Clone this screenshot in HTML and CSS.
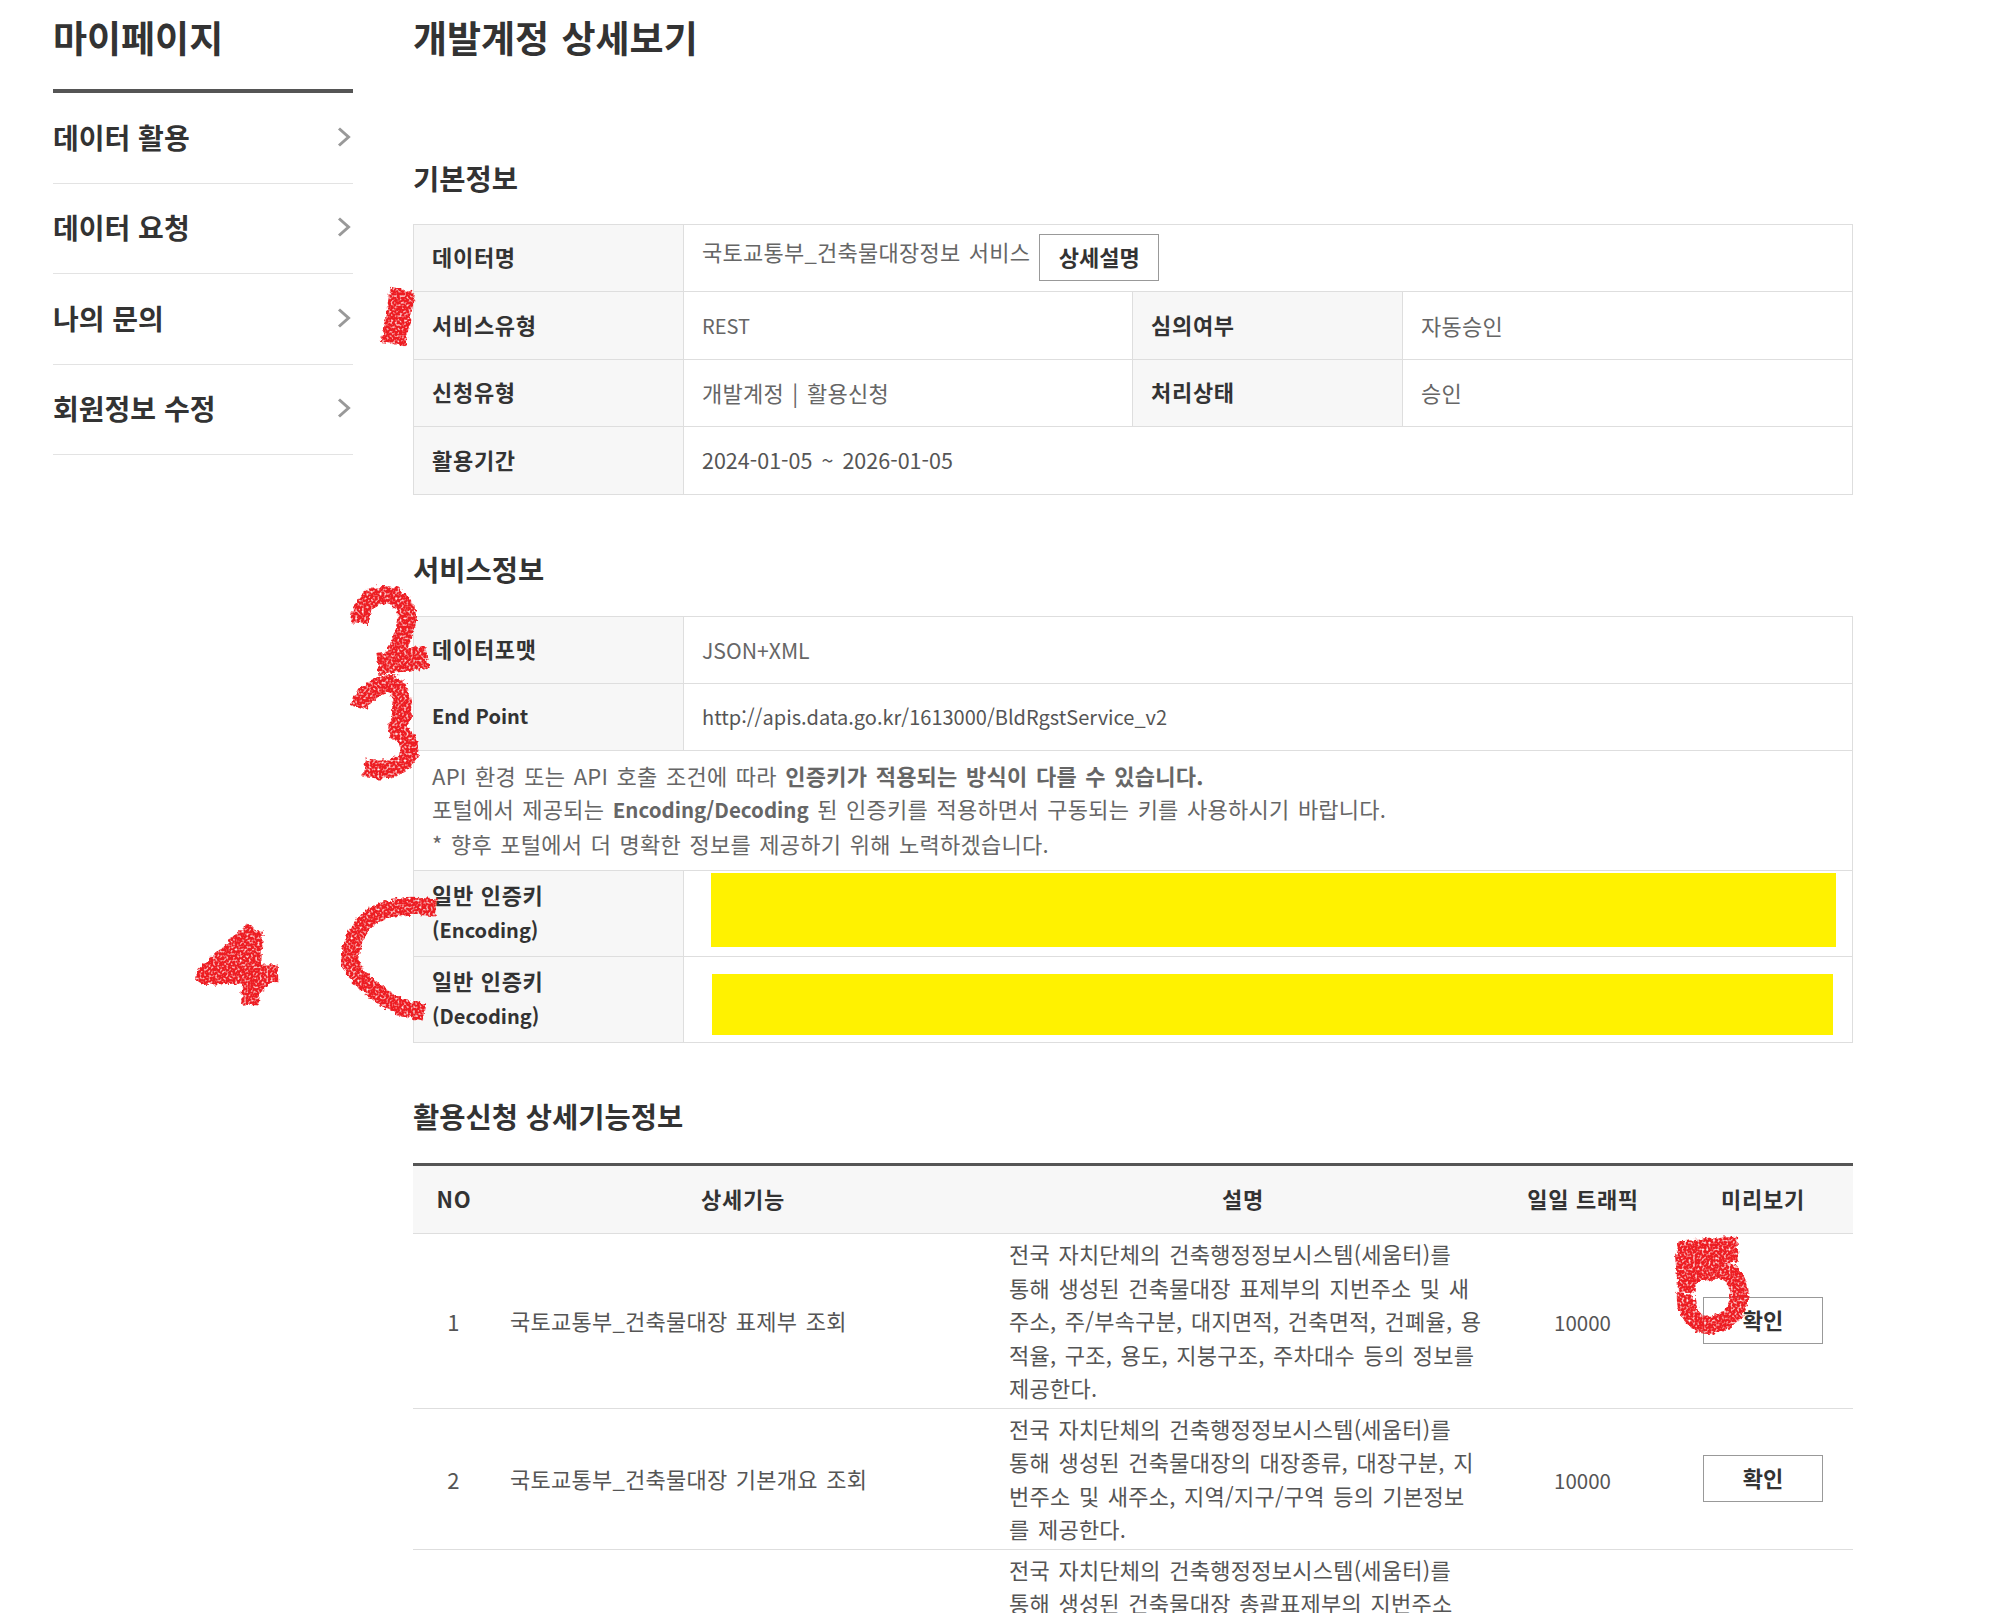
FILE: index.html
```html
<!DOCTYPE html>
<html lang="ko">
<head>
<meta charset="utf-8">
<title>개발계정 상세보기</title>
<link rel="stylesheet" href="styles.css">
</head>
<body>
<div class="page">
  <aside class="side">
    <h2 class="side-title">마이페이지</h2>
    <ul class="menu">
      <li class="menu-item"><span>데이터 활용</span><svg class="chev" viewBox="0 0 14 20"><path d="M2 1.5 L11.5 10 L2 18.5"/></svg></li>
      <li class="menu-item"><span>데이터 요청</span><svg class="chev" viewBox="0 0 14 20"><path d="M2 1.5 L11.5 10 L2 18.5"/></svg></li>
      <li class="menu-item"><span>나의 문의</span><svg class="chev" viewBox="0 0 14 20"><path d="M2 1.5 L11.5 10 L2 18.5"/></svg></li>
      <li class="menu-item"><span>회원정보 수정</span><svg class="chev" viewBox="0 0 14 20"><path d="M2 1.5 L11.5 10 L2 18.5"/></svg></li>
    </ul>
  </aside>
  <main class="main">
    <h1 class="page-title">개발계정 상세보기</h1>

    <h3 class="sec-title sec-basic">기본정보</h3>
    <table class="info basic">
      <colgroup><col class="c-label"><col class="c-val"><col class="c-label"><col></colgroup>
      <tr class="r67">
        <th>데이터명</th>
        <td colspan="3"><span class="lift">국토교통부_건축물대장정보 서비스</span><button class="btn btn-inline">상세설명</button></td>
      </tr>
      <tr class="r68"><th>서비스유형</th><td><span class="lat">REST</span></td><th>심의여부</th><td>자동승인</td></tr>
      <tr class="r67"><th>신청유형</th><td>개발계정 | 활용신청</td><th>처리상태</th><td>승인</td></tr>
      <tr class="r68"><th>활용기간</th><td colspan="3" class="dark"><span class="lat-d">2024-01-05 ~ 2026-01-05</span></td></tr>
    </table>

    <h3 class="sec-title sec-service">서비스정보</h3>
    <table class="info service">
      <colgroup><col class="c-label"><col></colgroup>
      <tr class="r67"><th>데이터포맷</th><td><span class="lat-j">JSON+XML</span></td></tr>
      <tr class="r67"><th><span class="lat">End Point</span></th><td class="dark"><span class="lat">http://apis.data.go.kr/1613000/BldRgstService_v2</span></td></tr>
      <tr>
        <td colspan="2" class="notice">API 환경 또는 API 호출 조건에 따라 <b>인증키가 적용되는 방식이 다를 수 있습니다.</b><br>
        포털에서 제공되는 <b class="lat-w">Encoding/Decoding</b> 된 인증키를 적용하면서 구동되는 키를 사용하시기 바랍니다.<br>
        * 향후 포털에서 더 명확한 정보를 제공하기 위해 노력하겠습니다.</td>
      </tr>
      <tr class="r86"><th>일반 인증키<br><span class="lat">(Encoding)</span></th><td class="key key-enc"><div class="mask mask-enc"></div></td></tr>
      <tr class="r86"><th>일반 인증키<br><span class="lat">(Decoding)</span></th><td class="key key-dec"><div class="mask mask-dec"></div></td></tr>
    </table>

    <h3 class="sec-title sec-detail">활용신청 상세기능정보</h3>
    <table class="detail">
      <colgroup><col class="d1"><col class="d2"><col class="d3"><col class="d4"><col></colgroup>
      <thead>
        <tr><th>NO</th><th>상세기능</th><th>설명</th><th>일일 트래픽</th><th>미리보기</th></tr>
      </thead>
      <tbody>
        <tr>
          <td class="ctr">1</td>
          <td class="name">국토교통부_건축물대장 표제부 조회</td>
          <td class="desc">전국 자치단체의 건축행정정보시스템(세움터)를<br>통해 생성된 건축물대장 표제부의 지번주소 및 새<br>주소, 주/부속구분, 대지면적, 건축면적, 건폐율, 용<br>적율, 구조, 용도, 지붕구조, 주차대수 등의 정보를<br>제공한다.</td>
          <td class="ctr"><span class="lat-w">10000</span></td>
          <td class="ctr"><button class="btn">확인</button></td>
        </tr>
        <tr>
          <td class="ctr">2</td>
          <td class="name">국토교통부_건축물대장 기본개요 조회</td>
          <td class="desc">전국 자치단체의 건축행정정보시스템(세움터)를<br>통해 생성된 건축물대장의 대장종류, 대장구분, 지<br>번주소 및 새주소, 지역/지구/구역 등의 기본정보<br>를 제공한다.</td>
          <td class="ctr"><span class="lat-w">10000</span></td>
          <td class="ctr"><button class="btn">확인</button></td>
        </tr>
        <tr class="row-tall">
          <td class="ctr">3</td>
          <td class="name">국토교통부_건축물대장 총괄표제부 조회</td>
          <td class="desc">전국 자치단체의 건축행정정보시스템(세움터)를<br>통해 생성된 건축물대장 총괄표제부의 지번주소</td>
          <td class="ctr"><span class="lat-w">10000</span></td>
          <td class="ctr"><button class="btn">확인</button></td>
        </tr>
      </tbody>
    </table>
  </main>

  <svg class="scribbles" viewBox="0 0 2006 1613" aria-hidden="true">
    <defs>
      <filter id="rough" x="-5%" y="-5%" width="110%" height="110%">
        <feTurbulence type="fractalNoise" baseFrequency="0.22" numOctaves="2" seed="4" result="n"/>
        <feDisplacementMap in="SourceGraphic" in2="n" scale="7" xChannelSelector="R" yChannelSelector="G" result="d"/>
        <feGaussianBlur in="d" stdDeviation="0.7" result="b"/>
        <feTurbulence type="fractalNoise" baseFrequency="0.45" numOctaves="1" seed="9"/>
        <feColorMatrix type="matrix" values="0 0 0 0 0  0 0 0 0 0  0 0 0 0 0  3 0 0 0 -0.55" result="speck"/>
        <feComposite in="b" in2="speck" operator="in"/>
      </filter>
    </defs>
    <g class="ink" filter="url(#rough)">
      <path class="w25" d="M403 290 L393 344"/>
      <path class="w18" d="M359 623 C361 603 372 595 384 595 C400 595 408 607 407 621 C405 635 398 645 395 659"/>
      <path class="w22" d="M378 664 L427 657"/>
      <path class="w18" d="M359 707 C364 692 380 684 392 684 C402 690 403 704 402 714 C400 722 396 726 397 730 C408 738 412 748 408 756 C402 768 386 772 364 768"/>
      <path class="w18" d="M254 930 L204 976 L278 973"/>
      <path class="w18" d="M254 930 L250 1005"/>
      <path class="fill" d="M250 935 L205 978 L275 980 L252 1000 Z"/>
      <path class="w16" d="M436 908 C415 905 392 905 374 915 C358 925 351 942 350 958 C352 975 368 985 384 998 C396 1006 410 1010 424 1012"/>
      <path class="w25" d="M1678 1254 L1738 1249"/>
      <path class="w18" d="M1684 1254 L1687 1292"/>
      <path class="w18" d="M1688 1276 C1705 1270 1726 1268 1733 1276 C1742 1288 1742 1300 1733 1314 C1724 1324 1708 1328 1698 1322 C1688 1314 1685 1304 1686 1294"/>
    </g>
  </svg>
</div>
</body>
</html>
```
FILE: styles.css
```css
* { box-sizing: border-box; }
html, body { margin: 0; padding: 0; height: 1613px; overflow: hidden; background: #fff; }
body { font-family: "Noto Sans CJK KR", "Noto Sans", sans-serif; color: #333; font-size: 22px; }

.page { position: relative; display: flex; width: 2006px; height: 1613px; overflow: hidden; padding-left: 53px; gap: 60px; }

.side { width: 300px; flex: none; }
.side-title { margin: 0; height: 93px; border-bottom: 4px solid #555; font-size: 37px; font-weight: 700; line-height: 75px; }
.menu { list-style: none; margin: 0; padding: 0; }
.menu-item { display: flex; align-items: center; justify-content: space-between; height: 90.5px; padding-bottom: 2px; border-bottom: 1px solid #e3e3e3; font-size: 28px; font-weight: 700; }
.chev { width: 14px; height: 20px; fill: none; stroke: #999; stroke-width: 3; margin-right: 2px; }

.main { width: 1440px; flex: none; }
.page-title { margin: 0; height: 78px; font-size: 37px; font-weight: 700; line-height: 75px; word-spacing: 2px; }
.sec-title { margin: 0; font-size: 28.5px; font-weight: 700; line-height: 36px; }
.sec-basic { margin-top: 82px; margin-bottom: 28px; }
.sec-service { margin-top: 56px; margin-bottom: 29px; }
.sec-detail { margin-top: 55px; margin-bottom: 29px; }

table { border-collapse: collapse; table-layout: fixed; width: 1440px; }
.c-label { width: 270px; }
.c-val { width: 449px; }
.info th, .info td { border: 1px solid #dedede; padding: 0 18px; font-size: 22px; line-height: 34px; }
.info th { background: #f7f7f7; font-weight: 700; text-align: left; color: #333; padding-bottom: 4px; letter-spacing: 0.7px; }
.info td { color: #666; padding-left: 18px; padding-bottom: 2px; letter-spacing: 0.25px; word-spacing: 2px; }
.info td.dark { color: #555; }
.r67 { height: 67px; }
.r68 { height: 68px; }
.r86 { height: 86px; }
.lift { position: relative; top: -2px; }
.lat { font-size: 20px; letter-spacing: 0; word-spacing: 0; }
.lat-w { font-size: 20.5px; letter-spacing: 0; word-spacing: 0; }
.lat-j { font-size: 21.2px; letter-spacing: 0; word-spacing: 0; }
.lat-d { font-size: 21.5px; letter-spacing: 0; word-spacing: 3px; }
.notice { height: 120px; line-height: 33.5px !important; }
.info td.key { padding: 0; }
.mask { background: #fff200; }
.mask-enc { height: 74px; width: 1125px; margin: -8px 0 0 27px; }
.mask-dec { height: 61px; width: 1121px; margin: 10px 0 0 28px; }

.btn { width: 120px; height: 47px; background: #fff; border: 1px solid #999; font: 700 22px "Noto Sans CJK KR", "Noto Sans", sans-serif; color: #333; padding: 0 0 3px; vertical-align: middle; letter-spacing: 0; word-spacing: 0; }
.btn-inline { margin-left: 9px; }

.detail { border-top: 3px solid #555; }
.d1 { width: 80px; }
.d2 { width: 498px; }
.d3 { width: 502px; }
.d4 { width: 178px; }
.detail th { height: 69px; background: #f7f7f7; border-bottom: 1px solid #dedede; font-size: 22px; font-weight: 700; text-align: center; color: #333; padding: 0 0 3px 2px; letter-spacing: 0.7px; }
.detail td { border-bottom: 1px solid #dedede; font-size: 22px; color: #555; padding: 0; letter-spacing: 0.25px; word-spacing: 2px; }
.detail .ctr { text-align: center; padding-left: 1px; }
.detail .ctr .btn { margin-left: 1px; }
.detail .name { padding-left: 17px; padding-bottom: 2px; }
.detail .desc { padding: 3px 0 3px 18px; line-height: 33.5px; white-space: nowrap; }
.row-tall { height: 240px; }
.row-tall .desc { vertical-align: top; }

.scribbles { position: absolute; left: 0; top: 0; width: 2006px; height: 1613px; pointer-events: none; }
.ink path { fill: none; stroke: #ed1c24; stroke-linecap: butt; stroke-linejoin: round; }
.ink .w25 { stroke-width: 25; }
.ink .w22 { stroke-width: 22; }
.ink .w18 { stroke-width: 18; }
.ink .w16 { stroke-width: 17; }
.ink .fill { fill: #ed1c24; stroke: none; }
```
